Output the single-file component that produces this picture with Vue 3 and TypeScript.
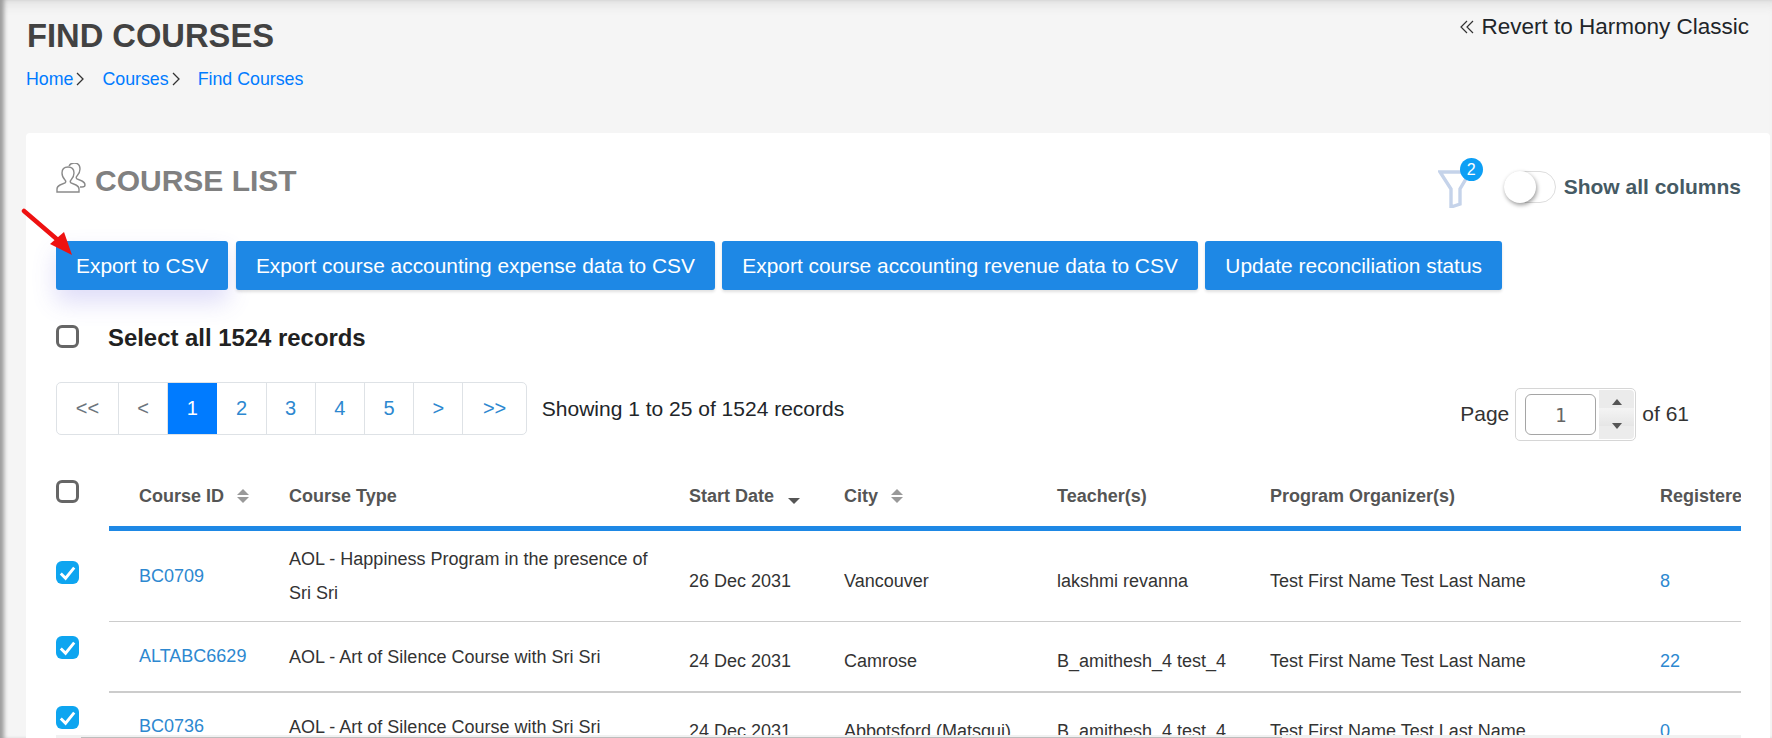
<script setup lang="ts">
interface Course {
  id: string
  type: string
  date: string
  city: string
  teacher: string
  organizer: string
  registered: number
}

const pages = [1, 2, 3, 4, 5]

const buttons = [
  'Export to CSV',
  'Export course accounting expense data to CSV',
  'Export course accounting revenue data to CSV',
  'Update reconciliation status',
]

const courses: Course[] = [
  {
    id: 'BC0709',
    type: 'AOL - Happiness Program in the presence of Sri Sri',
    date: '26 Dec 2031',
    city: 'Vancouver',
    teacher: 'lakshmi revanna',
    organizer: 'Test First Name Test Last Name',
    registered: 8,
  },
  {
    id: 'ALTABC6629',
    type: 'AOL - Art of Silence Course with Sri Sri',
    date: '24 Dec 2031',
    city: 'Camrose',
    teacher: 'B_amithesh_4 test_4',
    organizer: 'Test First Name Test Last Name',
    registered: 22,
  },
  {
    id: 'BC0736',
    type: 'AOL - Art of Silence Course with Sri Sri',
    date: '24 Dec 2031',
    city: 'Abbotsford (Matsqui)',
    teacher: 'B_amithesh_4 test_4',
    organizer: 'Test First Name Test Last Name',
    registered: 0,
  },
]
</script>

<template>
  <div class="page">
    <header class="page-head">
      <div>
        <h1 class="page-title">FIND COURSES</h1>
        <nav class="crumbs">
          <a class="crumb">Home</a>
          <svg class="crumb-sep" viewBox="0 0 8 14"><path d="M1 1l6 6-6 6" /></svg>
          <a class="crumb">Courses</a>
          <svg class="crumb-sep" viewBox="0 0 8 14"><path d="M1 1l6 6-6 6" /></svg>
          <a class="crumb">Find Courses</a>
        </nav>
      </div>
      <a class="revert">
        <svg class="revert-icon" viewBox="0 0 14 14"><path d="M7 1L1 7l6 6M13 1L7 7l6 6" /></svg>
        Revert to Harmony Classic
      </a>
    </header>

    <section class="card">
      <div class="card-head">
        <h2 class="card-title">
          <svg class="people" viewBox="0 0 30 30">
            <path d="M1 29v-3c0-2 1-3 3-4l5-2c1-1 1-2 0-3-2-2-3-4-3-7 0-4 2-6 6-6s6 2 6 6c0 3-1 5-3 7-1 1-1 2 0 3l5 2c2 1 3 2 3 4v3z" />
            <path d="M13 3c1-2 3-3 5-3 4 0 6 2 6 6 0 3-1 5-3 7-1 1-1 2 0 3l5 2c2 1 3 2 3 4 0 1-1 2-3 2h-2" />
          </svg>
          COURSE LIST
        </h2>
        <div class="card-tools">
          <div class="filter">
            <svg class="filter-icon" viewBox="0 0 34 38"><path d="M2 2h30L22 19v15l-9 3V19z" /></svg>
            <span class="filter-badge">2</span>
          </div>
          <span class="toggle"><span class="toggle-knob"></span></span>
          <span class="toggle-label">Show all columns</span>
        </div>
      </div>

      <div class="actions">
        <button v-for="label in buttons" :key="label" class="action">{{ label }}</button>
      </div>

      <label class="select-all">
        <span class="check"></span>
        <b>Select all 1524 records</b>
      </label>

      <div class="pager-row">
        <ul class="pager">
          <li class="muted">&lt;&lt;</li>
          <li class="muted">&lt;</li>
          <li
            v-for="p in pages"
            :key="p"
            :class="{ active: p === 1 }"
          >
            {{ p }}
          </li>
          <li>&gt;</li>
          <li>&gt;&gt;</li>
        </ul>
        <span class="showing">Showing 1 to 25 of 1524 records</span>
        <div class="page-jump">
          <span>Page</span>
          <div class="spin">
            <span class="spin-input">1</span>
            <span class="spin-btns">
              <i class="tri up"></i>
              <i class="tri down"></i>
            </span>
          </div>
          <span>of 61</span>
        </div>
      </div>

      <div class="table-wrap">
        <table class="courses">
          <colgroup>
            <col style="width: 53px" />
            <col style="width: 163px" />
            <col style="width: 400px" />
            <col style="width: 155px" />
            <col style="width: 213px" />
            <col style="width: 213px" />
            <col style="width: 390px" />
            <col style="width: 200px" />
          </colgroup>
          <thead>
            <tr>
              <th class="check-cell"><span class="check"></span></th>
              <th class="id-cell">Course ID <i class="sort"></i></th>
              <th>Course Type</th>
              <th>Start Date <i class="sort-down"></i></th>
              <th>City <i class="sort"></i></th>
              <th>Teacher(s)</th>
              <th>Program Organizer(s)</th>
              <th>Registered</th>
            </tr>
          </thead>
          <tbody>
            <tr v-for="c in courses" :key="c.id">
              <td class="check-cell">
                <span class="check on">
                  <svg viewBox="0 0 24 24"><path d="M5 13l5 5 9-11" /></svg>
                </span>
              </td>
              <td class="id-cell link">{{ c.id }}</td>
              <td class="type-cell">{{ c.type }}</td>
              <td class="low">{{ c.date }}</td>
              <td class="low">{{ c.city }}</td>
              <td class="low">{{ c.teacher }}</td>
              <td class="low">{{ c.organizer }}</td>
              <td class="low link">{{ c.registered }}</td>
            </tr>
          </tbody>
        </table>
      </div>
      <div class="hscroll"><span class="hscroll-thumb"></span></div>
    </section>

    <svg class="arrow" viewBox="0 0 60 56">
      <path d="M3 3L38 33" />
      <polygon points="51,47 29,36 43,24" />
    </svg>
  </div>
</template>

<style scoped>
.page {
  position: relative;
  box-sizing: border-box;
  height: 738px;
  overflow: hidden;
  padding-left: 26px;
  padding-right: 2px;
  background: #f5f5f5;
  box-shadow: inset 6px 0 4px -2px #9c9c9c, inset 0 12px 12px -8px #dedede;
  font-family: "Liberation Sans", Arial, sans-serif;
  color: #212529;
}

.page-head {
  display: flex;
  justify-content: space-between;
  align-items: flex-start;
  height: 133px;
}

.page-title {
  margin: 17px 0 0 1px;
  font-size: 32.7px;
  line-height: 38px;
  font-weight: 700;
  color: #424242;
}

.crumbs {
  display: flex;
  align-items: center;
  margin: 13px 0 0 0;
  font-size: 17.8px;
  line-height: 22px;
}

.crumb {
  color: #007bff;
}

.crumb-sep {
  width: 8px;
  height: 14px;
  margin: 0 18px 0 3px;
  fill: none;
  stroke: #333;
  stroke-width: 1.3;
}

.revert {
  display: flex;
  align-items: center;
  gap: 7px;
  margin: 14px 21px 0 0;
  font-size: 22.5px;
  line-height: 26px;
  color: #212529;
}

.revert-icon {
  width: 14px;
  height: 14px;
  fill: none;
  stroke: #333;
  stroke-width: 1.2;
}

.card {
  position: relative;
  box-sizing: border-box;
  height: 605px;
  padding: 30px 29px 0 30px;
  background: #fff;
  border-radius: 4px 4px 0 0;
  overflow: hidden;
}

.card-head {
  display: flex;
  justify-content: space-between;
  align-items: flex-start;
  height: 78px;
}

.card-title {
  display: flex;
  align-items: flex-start;
  gap: 9px;
  margin: 0;
  font-size: 30px;
  line-height: 36px;
  font-weight: 700;
  color: #808080;
}

.people {
  flex: none;
  width: 30px;
  height: 30px;
  fill: none;
  stroke: #8a8a8a;
  stroke-width: 1.4;
}

.card-tools {
  display: flex;
  align-items: center;
  margin-top: 3px;
}

.filter {
  position: relative;
  width: 34px;
  height: 42px;
  margin-right: 32px;
  padding-top: 4px;
  box-sizing: border-box;
}

.filter-icon {
  display: block;
  width: 34px;
  height: 38px;
  fill: none;
  stroke: #c5d3ea;
  stroke-width: 3.4;
}

.filter-badge {
  position: absolute;
  top: -8px;
  left: 22px;
  width: 23px;
  height: 23px;
  border-radius: 50%;
  background: #0d9ff5;
  color: #fff;
  font-size: 16px;
  line-height: 23px;
  text-align: center;
}

.toggle {
  position: relative;
  box-sizing: border-box;
  width: 52px;
  height: 32px;
  border: 1px solid #ddd;
  border-radius: 16px;
  margin-right: 8px;
}

.toggle-knob {
  position: absolute;
  top: -1px;
  left: -1px;
  width: 32px;
  height: 32px;
  border-radius: 50%;
  background: #fff;
  box-shadow: 1px 2px 4px rgba(0, 0, 0, 0.4);
}

.toggle-label {
  font-size: 21px;
  font-weight: 700;
  color: #455a64;
}

.actions {
  display: flex;
  gap: 7.5px;
}

.action {
  height: 49px;
  padding: 0 20px;
  border: 0;
  border-radius: 3px;
  background: #1e88e5;
  color: #fff;
  font: 20.9px "Liberation Sans", Arial, sans-serif;
  white-space: nowrap;
  box-shadow: 0 2px 3px rgba(0, 0, 0, 0.12);
}

.action:first-child {
  box-shadow: 0 12px 24px rgba(90, 80, 220, 0.2);
}

.select-all {
  display: flex;
  align-items: center;
  gap: 29px;
  margin-top: 35px;
  font-size: 23.9px;
  line-height: 23px;
  color: #212121;
}

.select-all b {
  position: relative;
  top: 1px;
}

.check {
  box-sizing: border-box;
  display: block;
  width: 23px;
  height: 23px;
  border: 3px solid #666;
  border-radius: 6px;
}

.check.on {
  border: 0;
  background: #0ea5f0;
}

.check svg {
  display: block;
  fill: none;
  stroke: #fff;
  stroke-width: 3;
}

.pager-row {
  display: flex;
  align-items: center;
  height: 53px;
  margin-top: 34px;
  font-size: 21px;
}

.pager {
  display: flex;
  height: 53px;
  box-sizing: border-box;
  margin: 0;
  padding: 0;
  list-style: none;
  border: 1px solid #dee2e6;
  border-radius: 5px;
  color: #2d88d0;
  font-size: 20px;
  overflow: hidden;
}

.pager li {
  box-sizing: border-box;
  display: flex;
  align-items: center;
  justify-content: center;
  width: 49.2px;
  border-right: 1px solid #dee2e6;
}

.pager li:first-child {
  width: 62px;
}

.pager li:last-child {
  width: 62.5px;
  border-right: 0;
}

.pager .muted {
  color: #6c757d;
}

.pager .active {
  background: #007bff;
  color: #fff;
  border-right-color: #007bff;
}

.showing {
  margin-left: 15px;
}

.page-jump {
  display: flex;
  align-items: center;
  gap: 6px;
  margin-top: 11px;
  margin-left: auto;
  margin-right: 52px;
  color: #333;
}

.spin {
  display: flex;
  box-sizing: border-box;
  align-items: stretch;
  width: 121px;
  height: 53px;
  padding: 1px;
  border: 1px solid #d6d6d6;
  border-radius: 5px;
  gap: 3px;
}

.spin-input {
  box-sizing: border-box;
  width: 71px;
  margin: 4px 0 4px 8px;
  border: 1px solid #a5a5a5;
  border-radius: 6px;
  font-family: "DejaVu Sans Mono", monospace;
  font-size: 19px;
  line-height: 40px;
  text-align: center;
  color: #666;
}

.spin-btns {
  flex: 1;
  display: flex;
  flex-direction: column;
  align-items: center;
  justify-content: space-between;
  padding: 9px 0 10px;
  background: linear-gradient(#ebebeb 0 36%, #f4f4f4 37%, #e6e6e6 73%, #ececec 74%);
  border-radius: 0 4px 4px 0;
}

.tri {
  width: 0;
  height: 0;
  border-left: 5.5px solid transparent;
  border-right: 5.5px solid transparent;
}

.tri.up {
  border-bottom: 6px solid #555;
}

.tri.down {
  border-top: 6px solid #555;
}

.table-wrap {
  margin-top: 21px;
  overflow: hidden;
}

.courses {
  table-layout: fixed;
  width: 1787px;
  border-collapse: separate;
  border-spacing: 0;
  font-size: 18px;
}

.courses th {
  box-sizing: border-box;
  height: 75px;
  padding: 10px 17px 0;
  border-bottom: 5px solid #1e88e5;
  font-size: 18px;
  font-weight: 700;
  text-align: left;
  white-space: nowrap;
  color: #555;
}

.courses td {
  box-sizing: border-box;
  padding: 0 17px;
  border-bottom: 1px solid #ccc;
  color: #333;
  white-space: nowrap;
}

.courses .check-cell {
  padding: 0;
  border-bottom: 0;
  vertical-align: top;
}

.courses th.check-cell {
  padding-top: 24px;
}

.courses tbody tr:nth-child(1) td {
  height: 91px;
}

.courses tbody tr:nth-child(2) td {
  height: 71px;
  border-bottom-width: 2px;
}

.courses tbody tr:nth-child(3) td {
  height: 68px;
}

.courses tbody tr:nth-child(1) .check-cell {
  padding-top: 30px;
}

.courses tbody tr:nth-child(2) .check-cell {
  padding-top: 14px;
}

.courses tbody tr:nth-child(3) .check-cell {
  padding-top: 13px;
}

.courses .id-cell {
  padding-left: 30px;
  padding-right: 0;
}

.courses td.type-cell {
  white-space: normal;
  line-height: 34px;
}

.courses td.low {
  padding-top: 10px;
}

.courses td.link {
  color: #2d88d0;
}

.sort,
.sort-down {
  display: inline-block;
  position: relative;
  width: 12px;
  height: 14px;
  margin-left: 8px;
  vertical-align: -1px;
}

.sort::before,
.sort::after {
  content: "";
  position: absolute;
  left: 0;
  border-left: 6px solid transparent;
  border-right: 6px solid transparent;
}

.sort::before {
  top: 0;
  border-bottom: 6px solid #999;
}

.sort::after {
  bottom: 0;
  border-top: 6px solid #999;
}

.sort-down::after {
  content: "";
  position: absolute;
  left: 1px;
  bottom: -1px;
  border-left: 6px solid transparent;
  border-right: 6px solid transparent;
  border-top: 6px solid #555;
}

.hscroll {
  position: absolute;
  left: 30px;
  right: 29px;
  bottom: 0;
  height: 3px;
  background: #f1f1f1;
}

.hscroll-thumb {
  position: absolute;
  left: 25px;
  width: 1201px;
  bottom: 0;
  height: 1px;
  background: #bdbdbd;
}

.arrow {
  position: absolute;
  left: 21px;
  top: 208px;
  width: 60px;
  height: 56px;
  pointer-events: none;
}

.arrow path {
  fill: none;
  stroke: #ee1111;
  stroke-width: 4.5;
  stroke-linecap: round;
}

.arrow polygon {
  fill: #ee1111;
}
</style>
